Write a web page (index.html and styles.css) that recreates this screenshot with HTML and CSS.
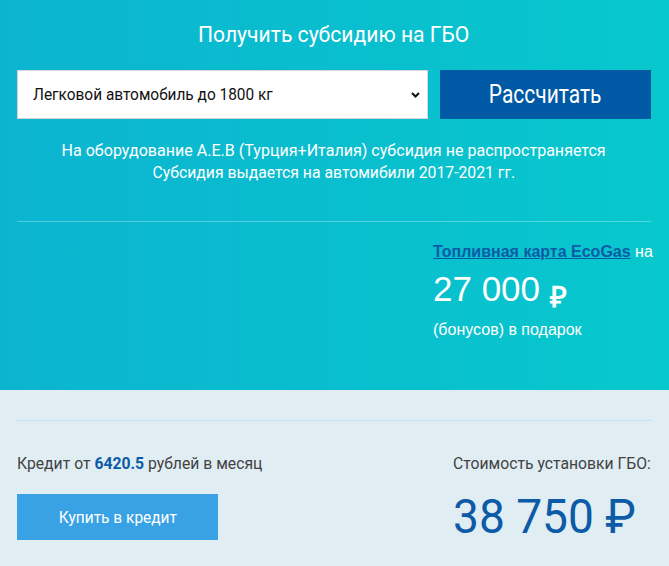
FILE: index.html
```html
<!DOCTYPE html>
<html lang="ru">
<head>
<meta charset="utf-8">
<link rel="stylesheet" href="styles.css">
</head>
<body>
<div class="page">
  <section class="top">
    <h1 class="title"><span class="nx nx-c sx-title">Получить субсидию на ГБО</span></h1>
    <div class="form-row">
      <div class="select-box">
        <span class="select-text"><span class="nx nx-l sx-select">Легковой автомобиль до 1800 кг</span></span>
        <svg class="chev" width="9" height="6" viewBox="0 0 9 6"><path d="M1 1l3.5 3.5L8 1" fill="none" stroke="#111" stroke-width="2"/></svg>
      </div>
      <button class="calc-btn"><span class="nx nx-c sx-calc">Рассчитать</span></button>
    </div>
    <p class="note"><span class="nx nx-c sx-note">На оборудование А.Е.В (Турция+Италия) субсидия не распространяется</span><br><span class="nx nx-c sx-note2">Субсидия выдается на автомибили 2017-2021 гг.</span></p>
    <hr class="sep sep-light">
    <div class="bonus">
      <div class="bonus-inner">
        <div class="bonus-line"><a class="card-link" href="#">Топливная карта EcoGas</a> на</div>
        <div class="bonus-sum">27 000 <span class="rub-small">₽</span></div>
        <div class="bonus-sub">(бонусов) в подарок</div>
      </div>
    </div>
  </section>
  <section class="bottom">
    <hr class="sep sep-blue">
    <div class="bottom-row">
      <div class="credit">
        <div class="credit-text"><span class="nx nx-l sx-credit">Кредит от <b class="credit-num">6420.5</b> рублей в месяц</span></div>
        <button class="credit-btn"><span class="nx nx-c sx-cbtn">Купить в кредит</span></button>
      </div>
      <div class="price">
        <div class="price-label"><span class="nx nx-r sx-label">Стоимость установки ГБО:</span></div>
        <div class="price-sum"><span class="nx nx-l sx-sum">38 750 ₽</span></div>
      </div>
    </div>
  </section>
</div>
</body>
</html>
```
FILE: styles.css
```css
* { box-sizing: border-box; }
html, body { margin: 0; padding: 0; }
body {
  width: 669px;
  height: 566px;
  overflow: hidden;
  font-family: Roboto, "Liberation Sans", sans-serif;
  background: #e0edf3;
}
.nx {
  display: inline-block;
  white-space: nowrap;
  transform: scaleX(var(--sx, 1));
}
.nx-c { transform-origin: center; }
.nx-l { transform-origin: left; }
.nx-r { transform-origin: right; }
.sx-title { --sx: 0.938; }
.sx-select { --sx: 0.964; }
.sx-calc { --sx: 0.84; }
.sx-note { --sx: 0.973; }
.sx-note2 { --sx: 0.955; }
.sx-credit { --sx: 0.925; }
.sx-cbtn { --sx: 0.91; }
.sx-label { --sx: 0.925; }
.sx-sum { --sx: 0.94; }

.top {
  height: 390px;
  background: linear-gradient(90deg, #0cb4d0 0%, #07c8cd 100%);
  padding: 0 18px 0 17px;
  overflow: hidden;
}
.title {
  margin: 0;
  padding-top: 21px;
  height: 70px;
  text-align: center;
  color: #fff;
  font-weight: normal;
  font-size: 22.5px;
  line-height: 26px;
}
.form-row {
  display: flex;
  gap: 12px;
  height: 49px;
}
.select-box {
  width: 411px;
  height: 49px;
  background: #fff;
  border: 1px solid #d6d6d6;
  display: flex;
  align-items: center;
  padding: 0 7px 0 15px;
  font-size: 16px;
  color: #111;
}
.select-text { flex: 1; }
.chev { display: block; }
.calc-btn {
  width: 211px;
  height: 49px;
  border: 0;
  background: #0059a5;
  color: #fff;
  font-family: inherit;
  font-size: 25px;
  padding: 0;
  margin: 0;
}
.note {
  margin: 0;
  padding-top: 21px;
  text-align: center;
  color: #fff;
  font-size: 16.5px;
  line-height: 22px;
}
.sep {
  border: 0;
  height: 1px;
  margin: 0;
}
.sep-light {
  margin-top: 37px;
  background: rgba(255,255,255,0.3);
}
.bonus {
  display: flex;
  justify-content: flex-end;
  padding-top: 20px;
}
.bonus-inner {
  width: 218px;
  font-family: "Liberation Sans", Arial, sans-serif;
  color: #fff;
  white-space: nowrap;
}
.bonus-line {
  font-size: 16px;
  line-height: 20px;
}
.card-link {
  color: #0d5ba6;
  font-weight: bold;
}
.bonus-sum {
  font-size: 35px;
  line-height: 40px;
  margin-top: 7px;
}
.rub-small {
  font-size: 29px;
  font-weight: bold;
  vertical-align: -6px;
}
.bonus-sub {
  font-size: 16px;
  line-height: 20px;
  margin-top: 3px;
}
.bottom {
  padding: 30px 18px 0 17px;
}
.sep-blue {
  background: #bddff2;
}
.bottom-row {
  display: flex;
  justify-content: space-between;
  padding-top: 31px;
}
.credit-text {
  font-size: 17px;
  line-height: 22px;
  color: #424242;
}
.credit-num {
  color: #0d5aa7;
  font-weight: bold;
}
.credit-btn {
  margin-top: 20px;
  width: 201px;
  height: 46px;
  border: 0;
  background: #38a2e5;
  color: #fff;
  font-family: inherit;
  font-size: 17px;
  padding: 0;
}
.price {
  display: flex;
  flex-direction: column;
  align-items: flex-start;
  width: 198px;
}
.price-label {
  align-self: stretch;
  display: flex;
  justify-content: flex-end;
  font-size: 17px;
  line-height: 22px;
  color: #424242;
}
.price-sum {
  margin-top: 15px;
  font-size: 49px;
  line-height: 56px;
  color: #0d5aa7;
}
```
